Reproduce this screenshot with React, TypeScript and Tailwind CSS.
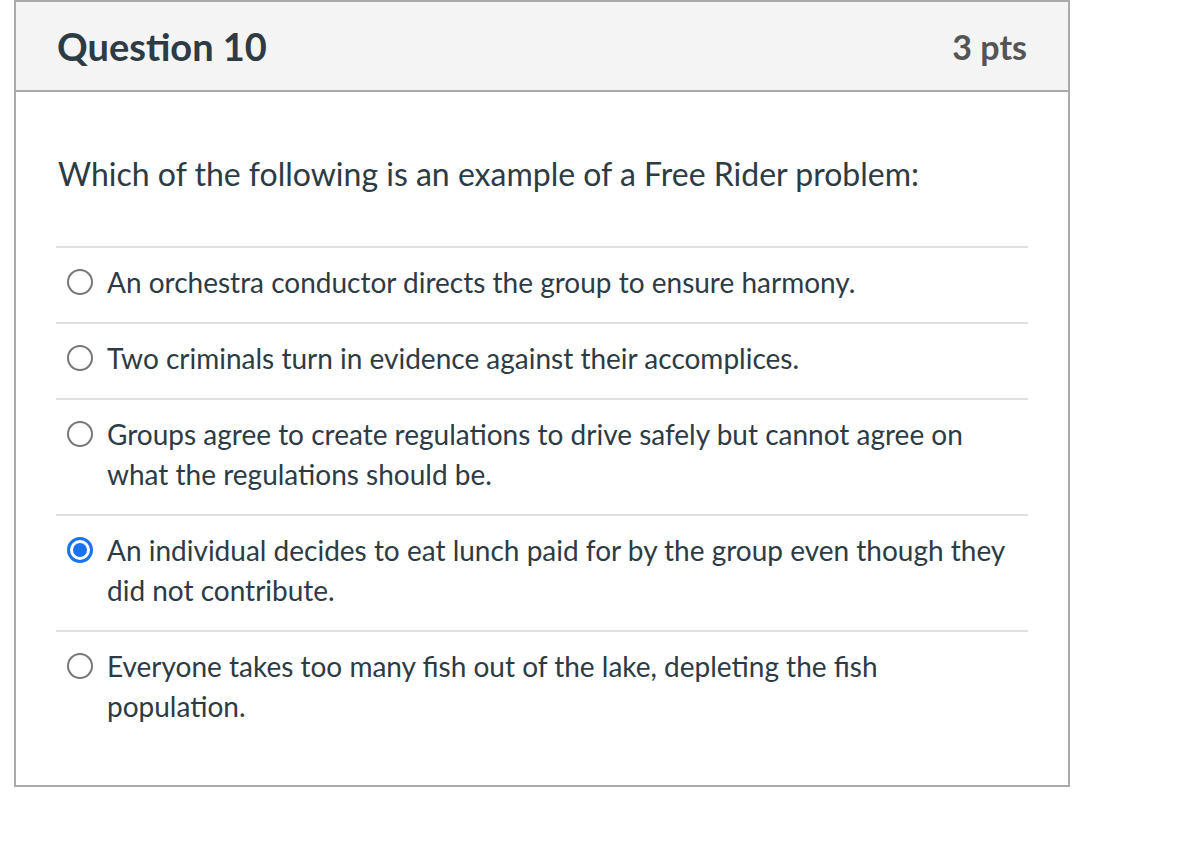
import React, { useState } from 'react'

const answers = [
  'An orchestra conductor directs the group to ensure harmony.',
  'Two criminals turn in evidence against their accomplices.',
  'Groups agree to create regulations to drive safely but cannot agree on what the regulations should be.',
  'An individual decides to eat lunch paid for by the group even though they did not contribute.',
  'Everyone takes too many fish out of the lake, depleting the fish population.',
]

const Radio: React.FC<{ checked: boolean }> = ({ checked }) => {
  if (checked) {
    return (
      <span className="flex h-[26px] w-[26px] items-center justify-center rounded-full border-[3px] border-[#1a73f0] bg-white">
        <span className="h-[14px] w-[14px] rounded-full bg-[#1a73f0]" />
      </span>
    )
  }
  return <span className="block h-[26px] w-[26px] rounded-full border-2 border-[#777] bg-white" />
}

const App: React.FC = () => {
  const [selected, setSelected] = useState(3)

  return (
    <div className="min-h-[846px] bg-white font-['Lato','Noto_Sans',sans-serif] text-[#2d3b45]">
      <div className="ml-[14px] w-[1056px] border-2 border-[#aaaaaa]">
        <div className="flex h-[90px] items-center justify-between border-b-2 border-[#aaaaaa] bg-[#f4f4f4] px-[41px]">
          <h2 className="text-[38px] font-bold">Question 10</h2>
          <span className="text-[34px] font-bold text-[#555555]">3 pts</span>
        </div>
        <div className="px-[40px] pb-[39px] pt-[62px]">
          <p className="mb-[52px] pl-[2px] text-[32px] leading-[40px]">
            Which of the following is an example of a Free Rider problem:
          </p>
          {answers.map((text, i) => (
            <label
              key={i}
              onClick={() => setSelected(i)}
              className="flex cursor-pointer items-start gap-[14px] border-t-2 border-[#e0e0e0] pb-[20px] pl-[11px] pr-[18px] pt-[14px]"
            >
              <span className="mt-[7px] shrink-0">
                <Radio checked={selected === i} />
              </span>
              <span className="text-[28px] leading-[40px]">{text}</span>
            </label>
          ))}
        </div>
      </div>
    </div>
  )
}

export default App
